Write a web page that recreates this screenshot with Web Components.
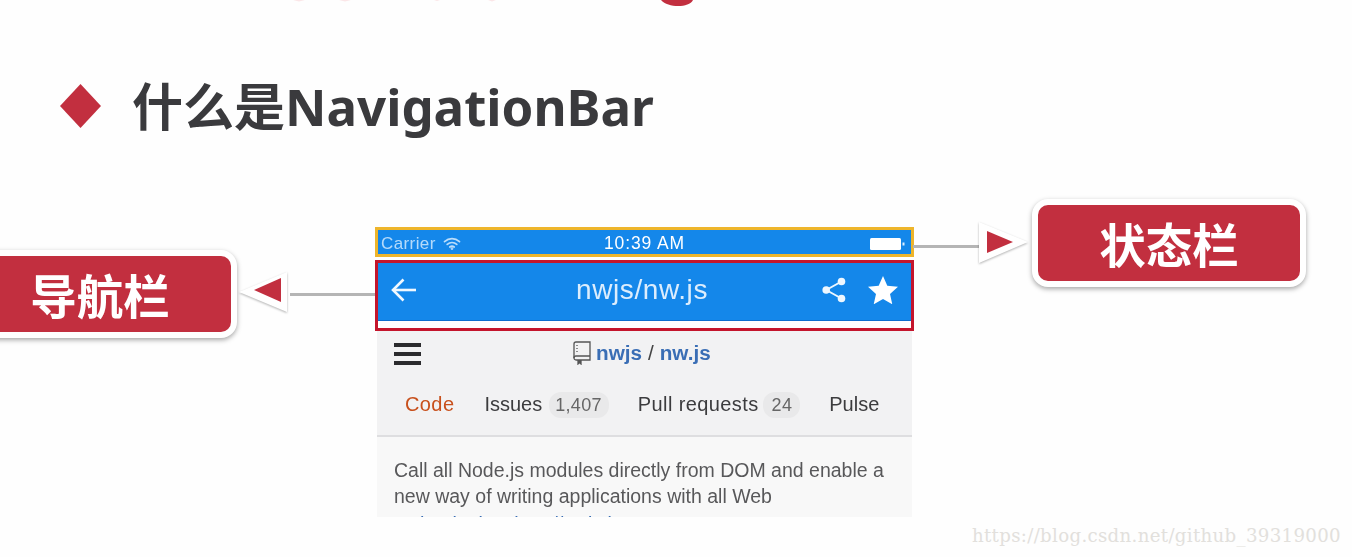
<!DOCTYPE html>
<html>
<head>
<meta charset="utf-8">
<title>NavigationBar</title>
<style>
    html, body { margin: 0; padding: 0; background: #fefefe; }
    body { width: 1352px; height: 557px; overflow: hidden; font-family: "Noto Sans", "Noto Sans CJK SC", sans-serif; }
</style>
</head>
<body>
<slide-page>
    <slide-heading text="什么是NavigationBar"></slide-heading>
    <call-out slot="over" side="right" text="状态栏" style="left:978px;top:199px"></call-out>
    <call-out slot="over" side="left" text="导航栏" style="left:-37px;top:250px"></call-out>
    <phone-shot>
        <status-strip></status-strip>
        <nav-strip title="nwjs/nw.js"></nav-strip>
        <repo-head></repo-head>
        <repo-tabs></repo-tabs>
        <repo-desc></repo-desc>
    </phone-shot>
</slide-page>

<script>
const CJK = '"Noto Sans CJK SC", sans-serif';
const UI = '"Liberation Sans", sans-serif';

class SlidePage extends HTMLElement {
    constructor() {
        super();
        const shadow = this.attachShadow({ mode: 'open' });
        shadow.innerHTML = `
        <style>
            :host { display: block; position: relative; width: 1352px; height: 557px; overflow: hidden; background: #fefefe; }
            .top-clip { height: 84px; position: relative; }
            .top-clip svg { position: absolute; left: 0; top: 0; filter: blur(.6px); }
            ::slotted(*) { filter: blur(.45px); }
            .mark {
                position: absolute; right: 11px; bottom: 11px; color: #e2e0dc;
                font: 18.2px "DejaVu Serif", "Liberation Serif", serif; letter-spacing: .31px; white-space: nowrap;
            }
        </style>
        <div class="top-clip">
            <svg width="1352" height="12" viewBox="0 0 1352 12">
                <path d="M661 0h32C689 8 668 8 661 0Z" fill="#c22f3f"/>
                <path d="M293 0h12l-6 1.500zM339 0h12l-6 1.500zM434 0h6l-3 1zM488 0h8l-4 1.500z" fill="#fbe6e8"/>
            </svg>
        </div>
        <slot></slot>
        <slot name="over"></slot>
        <div class="mark">https://blog.csdn.net/github_39319000</div>
        `;
    }
}

class SlideHeading extends HTMLElement {
    constructor() {
        super();
        const shadow = this.attachShadow({ mode: 'open' });
        shadow.innerHTML = `
        <style>
            :host { display: flex; align-items: center; gap: 31px; height: 44px; padding-left: 60px; margin-bottom: 99px; }
            svg { flex: none; }
            span {
                font: 700 51px/44px "Noto Sans", ${CJK};
                color: #3a3a3d; white-space: nowrap;
            }
        </style>
        <svg width="41" height="44" viewBox="0 0 41 44"><path d="M20.500 0L41 22 20.500 44 0 22Z" fill="#c22f3f"/></svg>
        <span>${this.getAttribute('text')}</span>
        `;
    }
}

class CallOut extends HTMLElement {
    constructor() {
        super();
        const side = this.getAttribute('side');
        const shadow = this.attachShadow({ mode: 'open' });
        shadow.innerHTML = `
        <style>
            :host { position: absolute; display: flex; align-items: center; flex-direction: ${side === 'right' ? 'row' : 'row-reverse'}; }
            .box {
                background: #c22f3f; border: 6px solid #fff; border-radius: 16px;
                box-shadow: 0 2px 5px rgba(0,0,0,.35);
                color: #fff; font: 700 46.500px/1 ${CJK};
                display: flex; align-items: center; justify-content: center;
                width: 262px; height: 76px;
            }
            svg { flex: none; }
        </style>
        ${side === 'right'
            ? `<svg width="55" height="46" viewBox="0 0 55 46" style="margin-right:-1px;filter:drop-shadow(0 1px 1px rgba(0,0,0,.3))"><path d="M1 2L50 22 1 43Z" fill="#fff"/><path d="M9 11L35 22 9 33Z" fill="#c22f3f"/></svg>`
            : `<svg width="55" height="46" viewBox="0 0 55 46" style="margin-left:-1px;filter:drop-shadow(0 1px 1px rgba(0,0,0,.3))"><path d="M51 1L3 21 51 41Z" fill="#fff"/><path d="M45 7L18 19 45 31Z" fill="#c22f3f"/></svg>`}
        <div class="box">${this.getAttribute('text')}</div>
        `;
    }
}

class PhoneShot extends HTMLElement {
    constructor() {
        super();
        const shadow = this.attachShadow({ mode: 'open' });
        shadow.innerHTML = `
        <style>
            :host { display: block; width: 539px; margin-left: 375px; font-family: ${UI}; position: relative; }
            .line { position: absolute; height: 3px; background: #b5b5b5; }
            .a { left: 538px; width: 67px; top: 18px; }
            .b { left: -85px; width: 85px; top: 66px; }
        </style>
        <slot></slot>
        <div class="line a"></div>
        <div class="line b"></div>
        `;
    }
}

class StatusStrip extends HTMLElement {
    constructor() {
        super();
        const shadow = this.attachShadow({ mode: 'open' });
        shadow.innerHTML = `
        <style>
            :host {
                display: grid; grid-template-columns: 1fr auto 1fr; align-items: center; box-sizing: border-box;
                height: 30px; margin-bottom: 3px; padding: 3px 5px 0 3px;
                background: #1487ea; border: 3px solid #eeb52b; color: #dcefff;
                font-size: 17px;
            }
            .l { display: flex; align-items: center; gap: 7px; opacity: .8; letter-spacing: .4px; }
            .t { color: #fff; font-size: 17.500px; letter-spacing: .9px; margin-left: 2px; }
            .r { display: flex; justify-content: flex-end; }
        </style>
        <div class="l">Carrier
            <svg width="18" height="13" viewBox="0 0 18 13" fill="none" stroke="#e6f3ff" stroke-width="1.700" stroke-linecap="round">
                <path d="M1.500 4.600C6 .6 12 .6 16.500 4.600"/><path d="M4.200 7.400C7 5 11 5 13.800 7.400"/><path d="M6.800 10C8 9 10 9 11.200 10"/>
                <circle cx="9" cy="11.600" r=".5"/>
            </svg>
        </div>
        <div class="t">10:39 AM</div>
        <div class="r">
            <svg width="36" height="14" viewBox="0 0 36 14"><rect x="0" y="1" width="31" height="12" rx="1.500" fill="#fff"/><rect x="32.500" y="5.500" width="2" height="3" fill="#dcefff"/></svg>
        </div>
        `;
    }
}

class NavStrip extends HTMLElement {
    constructor() {
        super();
        const shadow = this.attachShadow({ mode: 'open' });
        shadow.innerHTML = `
        <style>
            :host { display: block; box-sizing: border-box; height: 71px; border: 3px solid #c4152c; background: #fff; }
            .bar {
                height: 53px; background: #1487ea; display: flex; align-items: center; position: relative;
                padding: 0 13px 4px 12px; color: #dcedfd; border-bottom: 1px solid #0d6fcf; box-sizing: content-box;
            }
            .title { position: absolute; left: -5px; right: 0; text-align: center; font-size: 28px; letter-spacing: .6px; top: 11px; line-height: 32px; }
            .back { margin-right: auto; }
            .acts { display: flex; align-items: center; gap: 22px; position: relative; }
        </style>
        <div class="bar">
            <div class="title">${this.getAttribute('title')}</div>
            <svg class="back" width="27" height="26" viewBox="0 0 27 26" fill="none" stroke="#f1f8ff" stroke-width="2.600">
                <path d="M26 13H3"/><path d="M13.500 2.500L3 13l10.500 10.500"/>
            </svg>
            <div class="acts">
                <svg width="24" height="26" viewBox="0 0 24 26" fill="#eef7ff">
                    <circle cx="19.500" cy="4.500" r="3.800"/><circle cx="4.200" cy="13" r="3.800"/><circle cx="19.500" cy="21.500" r="3.800"/>
                    <path d="M4.200 13L19.500 4.500M4.200 13l15.300 8.500" stroke="#eef7ff" stroke-width="2" fill="none"/>
                </svg>
                <svg width="30" height="28" viewBox="0 0 30 28"><path d="M15 0l4.300 9.700 10.700 1-8 7.200 2.300 10.400L15 23l-9.300 5.300L8 17.900 0 10.700l10.700-1z" fill="#fff"/></svg>
            </div>
        </div>
        `;
    }
}

class RepoHead extends HTMLElement {
    constructor() {
        super();
        const shadow = this.attachShadow({ mode: 'open' });
        shadow.innerHTML = `
        <style>
            :host {
                display: flex; align-items: center; height: 45px; margin: 0 2px; background: #f2f2f3; position: relative; padding-left: 17px;
            }
            .ham { display: flex; flex-direction: column; gap: 5px; width: 27px; }
            .ham i { display: block; height: 4px; background: #2b2b2d; }
            .name {
                position: absolute; left: 196px; top: 8px; display: flex; align-items: center; gap: 4px;
                font: 700 20.700px/28px ${UI}; color: #3a6eb5; white-space: nowrap;
            }
            .sl { color: #444; font-weight: 400; margin: 0 6px; }
        </style>
        <div class="ham"><i></i><i></i><i></i></div>
        <div class="name">
            <svg width="19" height="24" viewBox="0 0 19 24" fill="none" stroke="#555" stroke-width="1.300"><path d="M3 1h14v18H3a2 2 0 0 1-2-2V3a2 2 0 0 1 2-2z"/><path d="M1 17a2 2 0 0 1 2-2h14"/><path d="M5 19v4l1.500-1.500L8 23v-4" fill="#555"/><path d="M4 4v8" stroke-dasharray="1 2"/></svg>
            <span>nwjs<span class="sl">/</span>nw.js</span>
        </div>
        `;
    }
}

class RepoTabs extends HTMLElement {
    constructor() {
        super();
        const shadow = this.attachShadow({ mode: 'open' });
        shadow.innerHTML = `
        <style>
            :host {
                display: flex; align-items: center; height: 61px; margin: 0 2px; background: #f2f2f3; box-sizing: border-box;
                padding: 0 0 2px 28px; border-bottom: 2px solid #dedee0; font: 20px ${UI}; color: #3c3c3e; white-space: nowrap;
            }
            .code { color: #c8501c; margin-right: 30px; letter-spacing: .4px; }
            .cnt { display: inline-block; background: #e9e9ea; border-radius: 12px; color: #666; margin-left: 7px; font-size: 18px; letter-spacing: .3px; line-height: 26px; }
            .iss { margin-right: 29px; }
            .iss .cnt { padding: 0 7px 0 6px; }
            .pr { margin-right: 29px; letter-spacing: .4px; }
            .pr .cnt { margin-left: 4px; padding: 0 8px 0 9px; }
        </style>
        <span class="code">Code</span>
        <span class="iss">Issues<span class="cnt">1,407</span></span>
        <span class="pr">Pull requests<span class="cnt">24</span></span>
        <span>Pulse</span>
        `;
    }
}

class RepoDesc extends HTMLElement {
    constructor() {
        super();
        const shadow = this.attachShadow({ mode: 'open' });
        shadow.innerHTML = `
        <style>
            :host {
                display: block; height: 80px; margin: 0 2px; overflow: hidden; background: #f8f8f8; box-sizing: border-box;
                padding: 20px 0 0 17px; font: 19.500px/26px ${UI}; color: #58585a;
            }
            .more { display: block; margin-top: 2px; color: #3a6eb5; white-space: nowrap; }
        </style>
        Call all Node.js modules directly from DOM and enable a<br>
        new way of writing applications with all Web
        <span class="more">technologies. http://nwjs.io</span>
        `;
    }
}

customElements.define('slide-page', SlidePage);
customElements.define('slide-heading', SlideHeading);
customElements.define('call-out', CallOut);
customElements.define('phone-shot', PhoneShot);
customElements.define('status-strip', StatusStrip);
customElements.define('nav-strip', NavStrip);
customElements.define('repo-head', RepoHead);
customElements.define('repo-tabs', RepoTabs);
customElements.define('repo-desc', RepoDesc);
</script>
</body>
</html>
